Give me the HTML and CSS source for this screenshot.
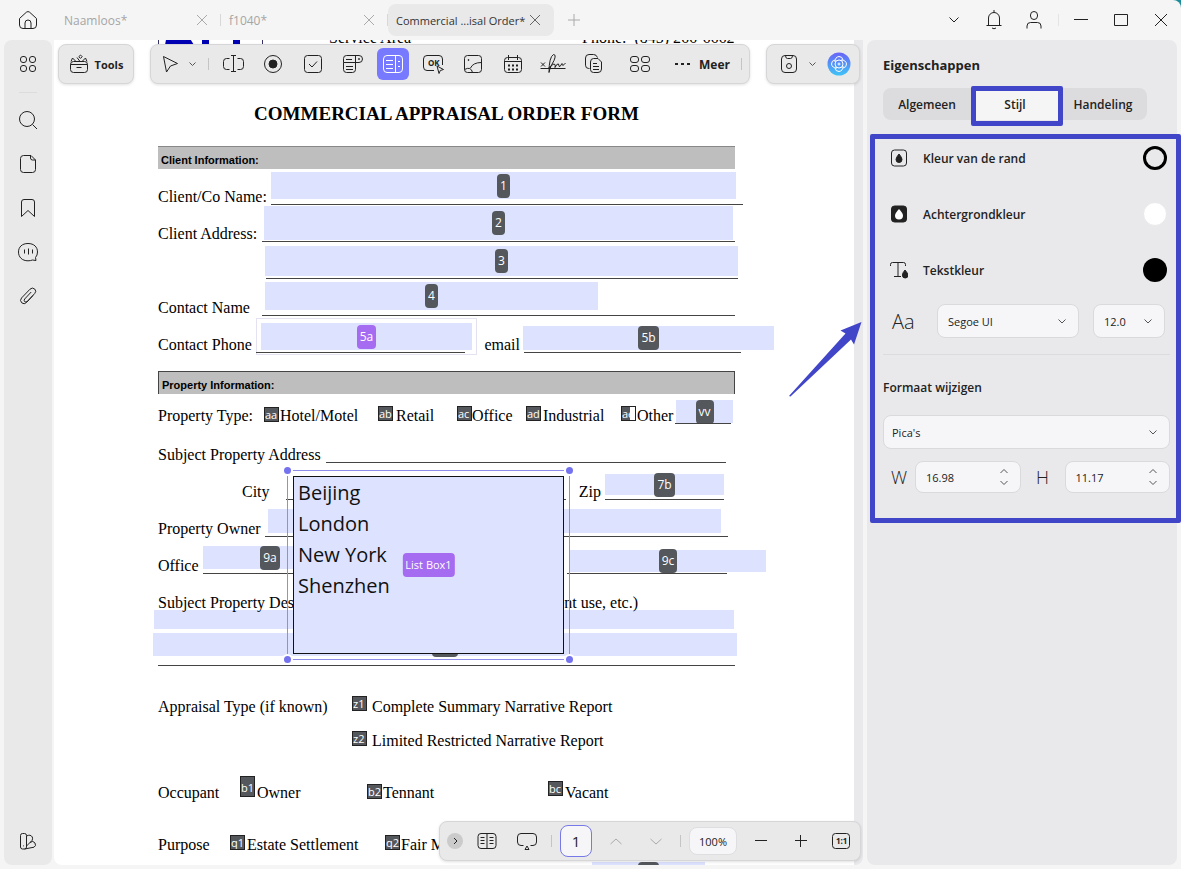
FILE: index.html
```html
<!DOCTYPE html>
<html lang="nl">
<head>
    <meta charset="UTF-8">
    <meta name="viewport" content="width=device-width, initial-scale=1.0">
    <title>Commercial Appraisal Order</title>
    <link rel="stylesheet" href="styles.css">
</head>
<body>
<div class="app">
    <header class="titlebar">
        <button class="home" aria-label="Start"><svg width="20" height="20" viewBox="0 0 20 20"><path d="M1.5 8.5 8.4 2.2q1.6-1.3 3.2 0l6.9 6.3V15q0 3.500-3.500 3.500H5Q1.500 18.500 1.500 15ZM7 18.500V13q0-3 3-3t3 3v5.500"/></svg></button>
        <nav class="tabs">
            <button class="tab tab-first"><span>Naamloos*</span><svg width="10" height="10" viewBox="0 0 10 10"><path d="M0 0 10 10M10 0 0 10"/></svg></button>
            <button class="tab tab-second"><span>f1040*</span><svg width="10" height="10" viewBox="0 0 10 10"><path d="M0 0 10 10M10 0 0 10"/></svg></button>
            <button class="tab active"><span>Commercial ...isal Order*</span><svg width="10" height="10" viewBox="0 0 10 10"><path d="M0 0 10 10M10 0 0 10"/></svg></button>
            <button class="add" aria-label="Nieuw tabblad"><svg width="12" height="12" viewBox="0 0 12 12"><path d="M6 0v12M0 6h12"/></svg></button>
        </nav>
        <div class="window-tools">
            <button aria-label="Tabbladen"><svg width="10" height="6" viewBox="0 0 10 6"><path d="m.5.5 4.500 4.500L9.500.5"/></svg></button>
            <button aria-label="Meldingen"><svg width="16" height="20" viewBox="0 0 16 20"><path d="M.5 15.500h15M2.500 15.500V8a5.500 5.500 0 0 1 11 0v7.500M8 0v2.500M6 18q2 1.500 4 0"/></svg></button>
            <button aria-label="Account"><svg width="16" height="18" viewBox="0 0 16 18"><rect x="4.500" y=".5" width="7" height="8" rx="3.500"/><path d="M1 17.500V15q0-3.500 3.500-3.500h7Q15 11.500 15 15v2.500"/></svg></button>
            <button class="split" aria-label="Minimaliseren"><svg width="14" height="14" viewBox="0 0 14 14"><path d="M0 6.500h14"/></svg></button>
            <button aria-label="Maximaliseren"><svg width="14" height="14" viewBox="0 0 14 14"><path d="M.5 1.500h13v11H.5z"/></svg></button>
            <button aria-label="Sluiten"><svg width="12" height="12" viewBox="0 0 12 12"><path d="M0 0 12 12M12 0 0 12"/></svg></button>
        </div>
    </header>

    <main>
        <aside class="rail">
            <button aria-label="Overzicht"><svg width="18" height="18" viewBox="0 0 18 18"><rect x="1.500" y="1.500" width="6" height="6" rx="2.500"/><rect x="10.500" y="1.500" width="6" height="6" rx="2.500"/><rect x="1.500" y="10.500" width="6" height="6" rx="2.500"/><rect x="10.500" y="10.500" width="6" height="6" rx="2.500"/></svg></button>
            <hr>
            <button aria-label="Zoeken"><svg width="20" height="20" viewBox="0 0 20 20"><circle cx="9" cy="9" r="7.500"/><path d="m14.500 14.500 4.500 4.500"/></svg></button>
            <button aria-label="Pagina's"><svg width="18" height="20" viewBox="0 0 18 20"><path d="M4.500 1.500H12l4.500 4.500v9.500q0 3-3 3h-9q-3 0-3-3v-11q0-3 3-3ZM11.500 1.500V4q0 2 2 2h3"/></svg></button>
            <button aria-label="Bladwijzers"><svg width="18" height="20" viewBox="0 0 18 20"><path d="M2.500 18.500V4q0-2.500 2.500-2.500h8q2.500 0 2.500 2.500v14.500L9 12.500Z"/></svg></button>
            <button aria-label="Opmerkingen"><svg width="22" height="20" viewBox="0 0 22 20"><path d="M18.500 15.500 19 18.500l-3.500-.5q-2 .8-4.500.8C5 18.800 1.500 15 1.500 10S5 1.500 11 1.500 20.500 5 20.500 10q0 3.300-2 5.500ZM7.500 7.500v4M11.500 6.500v6M15.500 7.500v4"/></svg></button>
            <button aria-label="Bijlagen"><svg width="20" height="20" viewBox="0 0 20 20"><path d="m15 9.500-6.500 7q-2.300 2.300-4.700.4Q1.300 14.500 3.500 12L12 3.200q2.300-2.200 4.700-.2 2.200 2.300 0 4.500l-7.500 8q-1.300 1-2.600.1-1-1.300.1-2.600l6.500-7"/></svg></button>
            <button class="last" aria-label="Thema"><svg width="18" height="18" viewBox="0 0 18 18"><rect x="1.500" y="1.500" width="6" height="15.500" rx="2"/><path d="M7.500 4q4-2 5.800 1 .7 1.800-.3 3.500L7.500 14M11 10.500q3-2.500 5 .5 1.500 3-1 4.200L5.500 17M4.500 13.500v.8"/></svg></button>
        </aside>

        <section class="viewer">
            <div class="sheet">
                <!-- form fields placed on the page -->
                <div class="fields">
                    <div class="field f1"><b>1</b></div>
                    <div class="field f2"><b>2</b></div>
                    <div class="field f3"><b>3</b></div>
                    <div class="field f4"><b>4</b></div>
                    <div class="field f5a picked"><b>5a</b></div>
                    <div class="field f5b"><b>5b</b></div>
                    <div class="field fvv"><b>vv</b></div>
                    <div class="field f7b"><b>7b</b></div>
                    <div class="field f8"></div>
                    <div class="field f9a"><b>9a</b></div>
                    <div class="field f9c"><b>9c</b></div>
                    <div class="field f10"></div>
                    <div class="field f11"><b></b></div>
                    <div class="field f12"><b></b></div>
                    <div class="check aa">aa</div>
                    <div class="check ab">ab</div>
                    <div class="check ac">ac</div>
                    <div class="check ad">ad</div>
                    <div class="check half ae">ae</div>
                    <div class="check z1">z1</div>
                    <div class="check z2">z2</div>
                    <div class="check b1">b1</div>
                    <div class="check b2">b2</div>
                    <div class="check bc">bc</div>
                    <div class="check q1">q1</div>
                    <div class="check q2">q2</div>
                </div>

                <div class="letterhead">
                    <svg class="brand" width="106" height="16" viewBox="0 0 106 16"><path class="edge" d="M.5 0v16M104.500 0v16"/><path class="ink" d="M10 0h16l10 16H7ZM44 0h7v16h-7ZM75 0h7v16h-7Z"/></svg>
                    <span>Service Area</span>
                    <span>Phone:&nbsp; (845) 266-6662</span>
                </div>
                <h1>COMMERCIAL APPRAISAL ORDER FORM</h1>
                <h2>Client Information:</h2>
                <div class="line first"><span>Client/Co Name:</span><i></i></div>
                <div class="line address"><span>Client Address:</span><i></i></div>
                <div class="line second-line"><span></span><i></i></div>
                <div class="line address"><span>Contact Name</span><i></i></div>
                <div class="line phone"><span>Contact Phone</span><i></i><span class="near">email</span><i></i></div>
                <h2 class="boxed">Property Information:</h2>
                <div class="line type"><span>Property Type:</span><span>Hotel/Motel</span><span>Retail</span><span>Office</span><span>Industrial</span><span>Other</span><i></i></div>
                <div class="line subject"><span>Subject Property Address</span><i></i></div>
                <div class="line city"><span>City</span><i></i><span class="near">Zip</span><i></i></div>
                <div class="line owner"><span>Property Owner</span><i></i></div>
                <div class="line office"><span>Office</span><i></i><i></i></div>
                <div class="line describe"><span>Subject Property Description</span><span class="end">(age, size, current use, etc.)</span></div>
                <div class="line blank"><i></i></div>
                <div class="line appraisal"><span>Appraisal Type (if known)</span><span>Complete Summary Narrative Report</span></div>
                <div class="line appraisal limited"><span></span><span>Limited Restricted Narrative Report</span></div>
                <div class="line occupant"><span>Occupant</span><span>Owner</span><span>Tennant</span><span>Vacant</span></div>
                <div class="line purpose"><span>Purpose</span><span>Estate Settlement</span><span>Fair Market Value</span></div>

                <div class="selection">
                    <ul>
                        <li>Beijing</li>
                        <li>London</li>
                        <li>New York</li>
                        <li>Shenzhen</li>
                    </ul>
                    <b class="name">List Box1</b>
                    <span class="knob nw"></span><span class="knob ne"></span><span class="knob sw"></span><span class="knob se"></span>
                </div>
            </div>

            <div class="toolbars">
                <button class="bar tools"><svg width="20" height="20" viewBox="0 0 20 20"><rect x="1.500" y="7.500" width="17" height="11" rx="3"/><path d="M1.500 10.500h17M7.500 13.500h5M2 7.500 3.500 4 7 7.500M13 7.500 16.500 4l1.500 3.500M8 3.500l3 4M11.500 1l1.700 1.700-1.700 1.700-1.700-1.700Z"/></svg>Tools</button>
                <div class="bar forms">
                    <button aria-label="Selecteren"><svg width="20" height="20" viewBox="0 0 20 20"><path d="M3.500 2.500 17.500 9.500 10.500 12 6.500 18Z"/></svg></button>
                    <button class="caret" aria-label="Meer selecties"><svg width="7" height="5" viewBox="0 0 7 5"><path d="m.5.5 3 3 3-3"/></svg></button>
                    <span class="sep"></span>
                    <button aria-label="Tekstveld"><svg width="22" height="20" viewBox="0 0 22 20"><path d="M7.500 4.500h-3q-3 0-3 3v5q0 3 3 3h3M15.500 4.500h3q3 0 3 3v5q0 3-3 3h-3M9 1.500h5M9 17.500h5M11.500 1.500v16"/></svg></button>
                    <button aria-label="Keuzerondje"><svg width="20" height="20" viewBox="0 0 20 20"><circle cx="10" cy="10" r="8.500"/><circle class="solid" cx="10" cy="10" r="4"/></svg></button>
                    <button aria-label="Selectievakje"><svg width="20" height="20" viewBox="0 0 20 20"><rect x="1.500" y="1.500" width="17" height="17" rx="3"/><path d="m6 10 3 3 5-5.500"/></svg></button>
                    <button aria-label="Keuzelijst"><svg width="22" height="20" viewBox="0 0 22 20"><path d="M4.500 1.500H17a3.500 3.500 0 0 1 0 7H1.500v-4q0-3 3-3ZM1.500 8.500v7q0 3 3 3h6q3 0 3-3v-14M4 5.500h6M4 12.500h7M4 15.500h7"/><circle class="solid" cx="17" cy="5" r=".5"/></svg></button>
                    <button class="on" aria-label="Lijstvak"><svg width="20" height="20" viewBox="0 0 20 20"><rect x=".5" y="1.500" width="19" height="17" rx="3.500"/><path d="M12.500 1.500v17M3 6.500h7M3 10.500h7M3 14.500h7M15 7.500h2M15 12.500h2"/></svg></button>
                    <button aria-label="Knop"><svg width="22" height="20" viewBox="0 0 22 20"><path d="M12 16.500H5q-3.500 0-3.500-3.500V5Q1.500 1.500 5 1.500h12q3.500 0 3.500 3.500v6M15 12l6.500 3.500-3.200 1-1.300 3Z"/><text x="6" y="12">OK</text></svg></button>
                    <button aria-label="Afbeelding"><svg width="20" height="20" viewBox="0 0 20 20"><rect x="1.500" y="1.500" width="17" height="17" rx="3"/><path d="M1.500 15.500Q8 12 9.500 18.500M7.500 14Q10 8.500 18.500 8.500"/><circle class="solid" cx="5.500" cy="6" r=".5"/></svg></button>
                    <button aria-label="Datum"><svg width="20" height="20" viewBox="0 0 20 20"><rect x="1.500" y="3.500" width="17" height="15" rx="3"/><path d="M1.500 7.500h17M5.500 1v5M14.500 1v5"/><path class="dots" d="M5 11.500h2M9 11.500h2M13 11.500h2M5 15.500h2M9 15.500h2M13 15.500h2"/></svg></button>
                    <button aria-label="Handtekening"><svg width="26" height="20" viewBox="0 0 26 20"><path d="M.5 14.500h25M1 8.500l4 4M5 8.500l-4 4M8 14.500q3-1 6-8Q16.500.5 13.500.5 9 3 9 18.500q1.500-8 5-8.500 2 0 1 3.500 2-4.500 3.500-3.500.5 3.500 1.500 2.500l2-3q0 4 3.500-.5"/></svg></button>
                    <button aria-label="Dupliceren"><svg width="20" height="20" viewBox="0 0 20 20"><path d="M6.500 14.500H5.800q-3.300 0-3.300-3.300V4q0-3.500 3.500-3.500h4.500q3 0 4 3M10.500 4.500h4.500l3.500 3.500v7q0 3.500-3.500 3.500h-4.500Q7.500 18.500 7.500 15.500V8q0-3.500 3-3.500ZM10 9.500h4M10 12.500h6M10 15.500h6"/></svg></button>
                    <button class="wide" aria-label="Uitlijnen"><svg width="22" height="18" viewBox="0 0 22 18"><rect x="1.500" y="1.500" width="8" height="6" rx="2.500"/><rect x="12.500" y="1.500" width="8" height="6" rx="2.500"/><rect x="1.500" y="10.500" width="8" height="6" rx="2.500"/><rect x="12.500" y="10.500" width="8" height="6" rx="2.500"/></svg></button>
                    <button class="more"><svg width="16" height="4" viewBox="0 0 16 4"><path class="dots" d="M0 2h3M6 2h3M12 2h3"/></svg>Meer</button>
                    <span class="sep"></span>
                </div>
                <div class="bar save">
                    <button aria-label="Opslaan"><svg width="18" height="20" viewBox="0 0 18 20"><rect x="1.500" y="1.500" width="15" height="17" rx="3.500"/><path d="M5.500 1.500q0 3 2 3h3q2 0 2-3"/><circle cx="9" cy="12" r="2.500"/></svg></button>
                    <button class="caret" aria-label="Opslaan als"><svg width="7" height="5" viewBox="0 0 7 5"><path d="m.5.5 3 3 3-3"/></svg></button>
                    <button class="ai" aria-label="AI-assistent"><svg width="24" height="24" viewBox="0 0 24 24"><defs><linearGradient id="sky" x2="0" y2="1"><stop offset="0" stop-color="#6a63f8"/><stop offset="1" stop-color="#3fc4f6"/></linearGradient></defs><circle class="disc" cx="12" cy="12" r="11.500" fill="url(#sky)"/><path d="M8 10q0-5 4-5.500 3.500 0 4 3.500M14 8q5 0 5.500 4 0 3.500-3.500 4M16 14q0 5-4 5.500-3.500 0-4-3.500M10 16q-5 0-5.500-4 0-3.500 3.500-4"/><circle cx="12" cy="12" r="4"/><circle cx="12" cy="12" r="1"/></svg></button>
                </div>
            </div>

            <div class="bar pager">
                <button class="round" aria-label="Inklappen"><svg width="5" height="8" viewBox="0 0 5 8"><path d="m1 1 3 3-3 3"/></svg></button>
                <button aria-label="Weergave"><svg width="20" height="18" viewBox="0 0 20 18"><rect x="1" y="1.500" width="18" height="15" rx="3"/><path d="M10 1.500v15M3.500 5.500h4M3.500 8.500h4M3.500 11.500h4M12.500 5.500h4M12.500 8.500h4M12.500 11.500h4"/></svg></button>
                <button aria-label="Presentatie"><svg width="22" height="18" viewBox="0 0 22 18"><path d="M7.500 13.500H5Q1.500 13.500 1.500 10V5Q1.500 1.500 5 1.500h12q3.500 0 3.500 3.500v5q0 3.500-3.500 3.500h-2.500M11 14l2 3.500H9Z"/></svg></button>
                <span class="sep"></span>
                <input class="page-number" value="1" aria-label="Pagina">
                <button class="dim" aria-label="Vorige"><svg width="12" height="7" viewBox="0 0 12 7"><path d="m.5 6 5.500-5 5.500 5"/></svg></button>
                <button class="dim" aria-label="Volgende"><svg width="12" height="7" viewBox="0 0 12 7"><path d="m.5 1 5.500 5 5.500-5"/></svg></button>
                <span class="sep"></span>
                <input class="zoom" value="100%" aria-label="Zoom">
                <button aria-label="Kleiner"><svg width="12" height="12" viewBox="0 0 12 12"><path d="M0 5.500h12"/></svg></button>
                <button aria-label="Groter"><svg width="12" height="12" viewBox="0 0 12 12"><path d="M0 5.500h12M5.500 0v12"/></svg></button>
                <button aria-label="Ware grootte"><svg width="20" height="18" viewBox="0 0 20 18"><rect x="1.500" y="1.500" width="17" height="15" rx="3"/><text x="5" y="12">1:1</text></svg></button>
            </div>
            <svg class="arrow" width="74" height="76" viewBox="0 0 74 76"><path d="M73.500 1 66 23.500 63 18.500 2.500 75.500 1 75 57.500 12.500 52.500 9.500Z"/></svg>
        </section>

        <aside class="panel">
            <h3>Eigenschappen</h3>
            <div class="segments">
                <button>Algemeen</button>
                <button class="chosen">Stijl</button>
                <button>Handeling</button>
            </div>
            <div class="props">
                <div class="prop">
                    <svg width="18" height="18" viewBox="0 0 18 18"><rect x="1.500" y="1" width="15" height="16" rx="3"/><path class="solid" d="M9 5q3 3.500 3 5.500a3 3 0 0 1-6 0Q6 8.500 9 5Z"/></svg>
                    <span>Kleur van de rand</span><button class="swatch ring" aria-label="Kleur van de rand"></button>
                </div>
                <div class="prop">
                    <svg width="18" height="18" viewBox="0 0 18 18"><rect class="solid" x="1.500" y="1" width="15" height="16" rx="3"/><path class="hole" d="M9 4q4 4 4 6.500a4 4 0 0 1-8 0Q5 8 9 4Z"/></svg>
                    <span>Achtergrondkleur</span><button class="swatch white" aria-label="Achtergrondkleur"></button>
                </div>
                <div class="prop">
                    <svg width="18" height="18" viewBox="0 0 18 18"><path d="M.5 5V3.500q0-2 2-2h11q2 0 2 2V5M8 1.500v14M4 15.500h7"/><path class="solid" d="M15 9q3 3.500 3 5.200a2.800 2.800 0 0 1-5.600 0Q12.400 12 15 9Z"/></svg>
                    <span>Tekstkleur</span><button class="swatch black" aria-label="Tekstkleur"></button>
                </div>
                <div class="font-row">
                    <label class="glyph" for="font">Aa</label>
                    <div class="drop font"><select id="font"><option>Segoe UI</option></select><svg width="8" height="5" viewBox="0 0 8 5"><path d="m.5.5 3.500 3.500 3.500-3.500"/></svg></div>
                    <div class="drop size"><select aria-label="Tekengrootte"><option>12.0</option></select><svg width="8" height="5" viewBox="0 0 8 5"><path d="m.5.5 3.500 3.500 3.500-3.500"/></svg></div>
                </div>
                <hr>
                <h4><label for="unit">Formaat wijzigen</label></h4>
                <div class="drop unit"><select id="unit"><option>Pica's</option></select><svg width="8" height="5" viewBox="0 0 8 5"><path d="m.5.5 3.500 3.500 3.500-3.500"/></svg></div>
                <div class="dims">
                    <label for="w">W</label>
                    <div class="drop"><input id="w" value="16.98"><svg width="8" height="16" viewBox="0 0 8 16"><path d="m.5 4 3.500-3.500L7.500 4M.5 12 4 15.500 7.500 12"/></svg></div>
                    <label for="h">H</label>
                    <div class="drop"><input id="h" value="11.17"><svg width="8" height="16" viewBox="0 0 8 16"><path d="m.5 4 3.500-3.500L7.500 4M.5 12 4 15.500 7.500 12"/></svg></div>
                </div>
            </div>
        </aside>
    </main>
</div>
</body>
</html>
```
FILE: styles.css
```css
* {
    box-sizing: border-box;
}
body {
    margin: 0;
    background: #1a8c9a;
    color: #222;
    font-family: "Open Sans", "Noto Sans", sans-serif;
    font-size: 11px;
}
button, input, select {
    font: inherit;
    color: inherit;
    border: none;
    background: none;
    padding: 0;
    margin: 0;
}
button {
    display: flex;
    align-items: center;
    justify-content: center;
    cursor: pointer;
}
h1, h2, h3, h4, ul {
    margin: 0;
    padding: 0;
}
svg {
    flex: none;
    fill: none;
    stroke: #222;
    stroke-width: 1;
}
svg .solid {
    fill: #222;
}
svg .hole {
    fill: #fff;
    stroke: none;
}
svg .dots {
    stroke-width: 2;
}
svg text {
    fill: #222;
    stroke: none;
    font-size: 8px;
    font-weight: 700;
}
.app {
    display: flex;
    flex-direction: column;
    height: 100vh;
    background: #f5f5f5;
    border-radius: 0 8px 0 0;
    overflow: hidden;
}

/* title bar */
.titlebar {
    display: flex;
    align-items: center;
    height: 40px;
    flex: none;
}
.home {
    width: 56px;
    height: 40px;
}
.tabs {
    display: flex;
    align-items: center;
}
.tab {
    position: relative;
    justify-content: space-between;
    height: 32px;
    padding: 0 14px 0 8px;
    border-radius: 8px;
    color: #a5a5a5;
    font-size: 11px;
}
.tab svg, .add svg {
    stroke: #aaa;
}
.tab-first {
    width: 165px;
}
.tab-second {
    width: 167px;
}
.tab-first, .tab-second {
    font-size: 12px;
}
.tab-first::after, .tab-second::after {
    content: "";
    position: absolute;
    right: 0;
    width: 1px;
    height: 12px;
    background: #d8d8d8;
}
.tab.active {
    width: 166px;
    background: #e9e9e9;
    color: #333;
}
.tab.active svg {
    stroke: #666;
}
.add {
    width: 40px;
}
.window-tools {
    display: flex;
    margin-left: auto;
}
.window-tools button {
    width: 40px;
    height: 40px;
}
.window-tools .split {
    position: relative;
    margin-left: 7px;
}
.window-tools .split::before {
    content: "";
    position: absolute;
    left: -3px;
    width: 1px;
    height: 12px;
    background: #e4e4e4;
}

main {
    display: flex;
    flex: 1;
    min-height: 0;
    padding: 0 4px 4px;
}

/* left rail */
.rail {
    display: flex;
    flex-direction: column;
    align-items: center;
    width: 48px;
    padding: 8px 0;
    margin-right: 2px;
    border-radius: 8px;
    background: #e9e9e9;
}
.rail button {
    width: 32px;
    height: 32px;
    margin-bottom: 12px;
}
.rail hr {
    width: 18px;
    height: 1px;
    margin: 0 0 11px;
    border: none;
    background: #dcdcdc;
}
.rail .last {
    margin: auto 0 0;
}

/* document, with the scroll track on its right */
.viewer {
    position: relative;
    flex: 1;
    overflow: hidden;
    padding-right: 9px;
    border-radius: 0 0 8px 8px;
    background: linear-gradient(to left, #e9e8ea 9px, #fff 9px);
}
.sheet {
    position: relative;
    display: flow-root;
    width: 800px;
    margin: 0 auto;
    padding: 0 119px 0 104px;
    color: #000;
    font: 16px/18px "Liberation Serif", serif;
}
.letterhead {
    position: relative;
    display: grid;
    grid-template-columns: 171px 253px 1fr;
    height: 72px;
    margin-top: -11px;
    white-space: nowrap;
}
.brand .edge {
    stroke: #336;
}
.brand .ink {
    fill: #0000b4;
    stroke: none;
}
.sheet h1 {
    font-size: 19px;
    line-height: 26px;
    text-align: center;
    white-space: nowrap;
}
.sheet h2 {
    height: 23px;
    margin-top: 19px;
    padding: 0 3px;
    border-top: 1px solid #888;
    background: #bebebe;
    font: bold 11px/27px "Liberation Sans", sans-serif;
}
.sheet h2.boxed {
    margin-top: 18px;
    border: 1px solid #444;
    border-bottom: none;
}
.line {
    position: relative;
    display: grid;
    align-items: end;
    height: 37px;
    line-height: 17px;
    white-space: nowrap;
}
.line i {
    height: 1px;
    background: #444;
}
.line.first {
    height: 36px;
    grid-template-columns: 113px 472px;
}
.line.address {
    grid-template-columns: 104px 473px;
}
.line.second-line {
    grid-template-columns: 108px 472px;
}
.line.phone {
    grid-template-columns: 98px 209px 59px 217px;
}
.line .near {
    padding-right: 4px;
    text-align: right;
}
.line.type {
    height: 30px;
    grid-template-columns: 122px 116px 76px 71px 94px 38px 56px;
}
.line.subject {
    height: 39px;
    grid-template-columns: 168px 400px;
}
.line.city {
    grid-template-columns: 44px 280px 39px 119px;
    padding-left: 84px;
}
.line.owner {
    grid-template-columns: 107px 463px;
}
.line.office {
    grid-template-columns: 45px 350px 160px;
}
.line.office i:last-child {
    margin-left: 14px;
    margin-right: -14px;
}
.line.describe {
    grid-template-columns: 240px 240px;
}
.line .end {
    text-align: right;
}
.line.blank {
    height: 55px;
}
.line.appraisal {
    height: 49px;
    grid-template-columns: 214px 1fr;
}
.line.limited {
    height: 34px;
}
.line.occupant {
    height: 52px;
    grid-template-columns: 99px 126px 182px 1fr;
}
.line.purpose {
    height: 52px;
    grid-template-columns: 89px 154px 1fr;
}

/* fields dropped on the page */
.field {
    position: absolute;
    display: flex;
    align-items: center;
    justify-content: center;
    background: #dde3ff;
}
.field b, .name {
    min-height: 24px;
    padding: 0 3px;
    border-radius: 4px;
    background: #54575b;
    color: #fff;
    font: 12px/24px "Open Sans", sans-serif;
}
.field.picked b, .selection .name {
    background: #a56bf0;
}
.selection .name {
    font-size: 11px;
}
.picked::after {
    content: "";
    position: absolute;
    inset: -5px;
    border: 1px solid #e4e2f2;
}
.f1 { left: 217px; top: 132px; width: 465px; height: 27px; }
.f2 { left: 210px; top: 166px; width: 469px; height: 34px; }
.f3 { left: 211px; top: 206px; width: 473px; height: 30px; }
.f4 { left: 211px; top: 242px; width: 333px; height: 28px; }
.f5a { left: 207px; top: 283px; width: 211px; height: 27px; }
.f5b { left: 469px; top: 286px; width: 251px; height: 24px; }
.fvv { left: 622px; top: 360px; width: 57px; height: 23px; }
.f7b { left: 551px; top: 434px; width: 119px; height: 21px; }
.f8 { left: 214px; top: 469px; width: 453px; height: 24px; }
.f9a { left: 149px; top: 506px; width: 134px; height: 23px; }
.f9c { left: 516px; top: 510px; width: 196px; height: 22px; }
.f10 { left: 100px; top: 570px; width: 580px; height: 19px; }
.f11 { left: 99px; top: 593px; width: 584px; height: 23px; }
.f12 { left: 538px; top: 822px; width: 113px; height: 23px; }
.f11 b {
    width: 26px;
}
.f12 b {
    width: 21px;
}

.check {
    position: absolute;
    width: 15px;
    height: 15px;
    border: 1px solid #222;
    background: #54575b;
    color: #fff;
    font: 11px/13px "Open Sans", sans-serif;
    overflow: hidden;
}
.check.half {
    background: linear-gradient(90deg, #54575b 8px, #fff 8px);
}
.aa { left: 210px; top: 367px; }
.ab { left: 324px; top: 366px; }
.ac { left: 403px; top: 366px; }
.ad { left: 472px; top: 366px; }
.ae { left: 567px; top: 366px; }
.z1 { left: 298px; top: 656px; }
.z2 { left: 298px; top: 691px; }
.b1 { left: 186px; top: 736px; height: 21px; line-height: 21px; }
.b2 { left: 313px; top: 744px; }
.bc { left: 494px; top: 741px; }
.q1 { left: 176px; top: 795px; }
.q2 { left: 331px; top: 795px; }

.selection {
    position: absolute;
    left: 233px;
    top: 430px;
    width: 283px;
    height: 190px;
    padding: 5px;
    border: 1px solid #8f8dea;
}
.selection ul {
    height: 178px;
    padding: 0 4px;
    border: 1px solid #111;
    background: #dde3ff;
    color: #111;
    font: 20px/31px "Open Sans", sans-serif;
    list-style: none;
}
.selection .name {
    position: absolute;
    left: 50%;
    top: 50%;
    transform: translate(-50%, -50%);
}
.knob {
    position: absolute;
    width: 7px;
    height: 7px;
    border-radius: 50%;
    background: #7472ee;
    box-shadow: 0 0 0 2px #fff;
}
.nw { left: -4px; top: -4px; }
.ne { right: -4px; top: -4px; }
.sw { left: -4px; bottom: -4px; }
.se { right: -4px; bottom: -4px; }

/* floating toolbars */
.toolbars {
    position: absolute;
    left: 4px;
    right: 3px;
    top: 4px;
    display: flex;
    gap: 16px;
}
.bar {
    display: flex;
    align-items: center;
    height: 40px;
    border: 1px solid #d6d6d8;
    border-radius: 8px;
    background: #e9e9e9;
    box-shadow: 0 1px 3px rgba(0, 0, 0, 0.12);
}
.bar button {
    width: 32px;
    height: 32px;
    border-radius: 6px;
}
.bar .sep {
    width: 1px;
    height: 12px;
    background: #c4c4c4;
}
.bar .caret svg {
    stroke: #555;
}
.toolbars .tools {
    gap: 6px;
    width: 76px;
    height: 40px;
    border-radius: 8px;
    font-size: 11px;
    font-weight: 700;
}
.forms {
    flex: 1;
    gap: 8px;
    padding: 0 7px 0 3px;
}
.forms .caret {
    width: 16px;
    margin-left: -10px;
}
.forms .on {
    background: #7779ff;
}
.forms .on svg {
    stroke: #fff;
}
.forms .wide {
    width: 46px;
}
.forms .more {
    gap: 8px;
    width: auto;
    margin-left: 4px;
    font-size: 12px;
    font-weight: 700;
}
.forms .more + .sep {
    margin-left: auto;
}
.save {
    width: 94px;
    padding: 0 8px 0 6px;
}
.save .caret {
    width: 14px;
}
.save .ai {
    width: 24px;
    margin-left: auto;
}
.ai svg {
    stroke: #fff;
}
.ai .disc {
    stroke: none;
}
.pager {
    position: absolute;
    right: 2px;
    bottom: 4px;
    gap: 8px;
    padding: 0 3px 0 7px;
}
.pager .round {
    width: 16px;
    height: 16px;
    border-radius: 50%;
    background: #cbcbcb;
}
.pager .dim svg {
    stroke: #aaa;
}
.pager input {
    border-radius: 8px;
    background: #f6f6f8;
    text-align: center;
}
.page-number {
    width: 32px;
    height: 32px;
    border: 1px solid #7779e8;
    font-size: 15px;
}
.zoom {
    width: 48px;
    height: 28px;
    border: 1px solid #dedee0;
    font-size: 11px;
}
.arrow {
    position: absolute;
    right: 1px;
    top: 281px;
    fill: #4145c8;
    stroke: none;
}

/* properties */
.panel {
    position: relative;
    width: 310px;
    margin-left: 4px;
    border-radius: 8px;
    background: #e9e9eb;
}
.panel h3 {
    padding: 16px 16px 14px;
    font-size: 13px;
    line-height: 18px;
}
.segments {
    display: flex;
    width: 264px;
    margin-left: 16px;
    border-radius: 8px;
    background: #dcdcde;
}
.segments button {
    flex: 1;
    height: 32px;
    font-size: 12px;
    font-weight: 600;
}
.segments .chosen {
    position: relative;
    background: #f5f5f5;
}
.segments .chosen::after {
    content: "";
    position: absolute;
    inset: -2px -4px -6px 0;
    border: 5px solid #4145c8;
    border-radius: 2px;
}
.props {
    position: relative;
    height: 389px;
    margin: 14px -4px 0 3px;
    padding: 0 11px 0 13px;
}
.props::after {
    content: "";
    position: absolute;
    inset: 0;
    border: 5px solid #4145c8;
    border-radius: 2px;
    pointer-events: none;
}
.prop {
    display: flex;
    align-items: center;
    gap: 15px;
    height: 48px;
    margin-bottom: 8px;
    padding: 0 3px 0 7px;
    font-size: 12px;
    font-weight: 600;
}
.swatch {
    width: 24px;
    height: 24px;
    margin-left: auto;
    border-radius: 50%;
}
.ring {
    border: 3px solid #000;
}
.white {
    border: 1px solid #e9e9eb;
    background: #fff;
}
.black {
    background: #000;
}
.font-row {
    display: flex;
    align-items: center;
    gap: 14px;
    margin-top: 10px;
    padding-left: 9px;
}
.glyph {
    width: 31px;
    font-size: 20px;
    font-weight: 300;
}
.drop {
    position: relative;
    display: flex;
    align-items: center;
    height: 34px;
    border: 1px solid #dadadd;
    border-radius: 8px;
    background: #f6f6f8;
}
.drop select, .drop input {
    appearance: none;
    width: 100%;
    height: 100%;
    padding: 0 24px 0 10px;
    outline: none;
}
.drop svg {
    position: absolute;
    right: 12px;
    stroke: #555;
    pointer-events: none;
}
.drop.font {
    width: 142px;
}
.drop.size {
    width: 72px;
}
.drop.unit select {
    padding-left: 8px;
}
.props hr {
    height: 1px;
    margin: 16px 0 24px;
    border: none;
    background: #dcdcde;
}
.props h4 {
    margin-bottom: 18px;
    font-size: 12px;
    line-height: 18px;
    font-weight: 600;
}
.dims {
    display: grid;
    grid-template-columns: 32px 1fr 44px 1fr;
    align-items: center;
    margin-top: 12px;
}
.dims label {
    font-size: 18px;
    font-weight: 300;
    text-align: center;
}
.dims .drop {
    height: 32px;
}
```
